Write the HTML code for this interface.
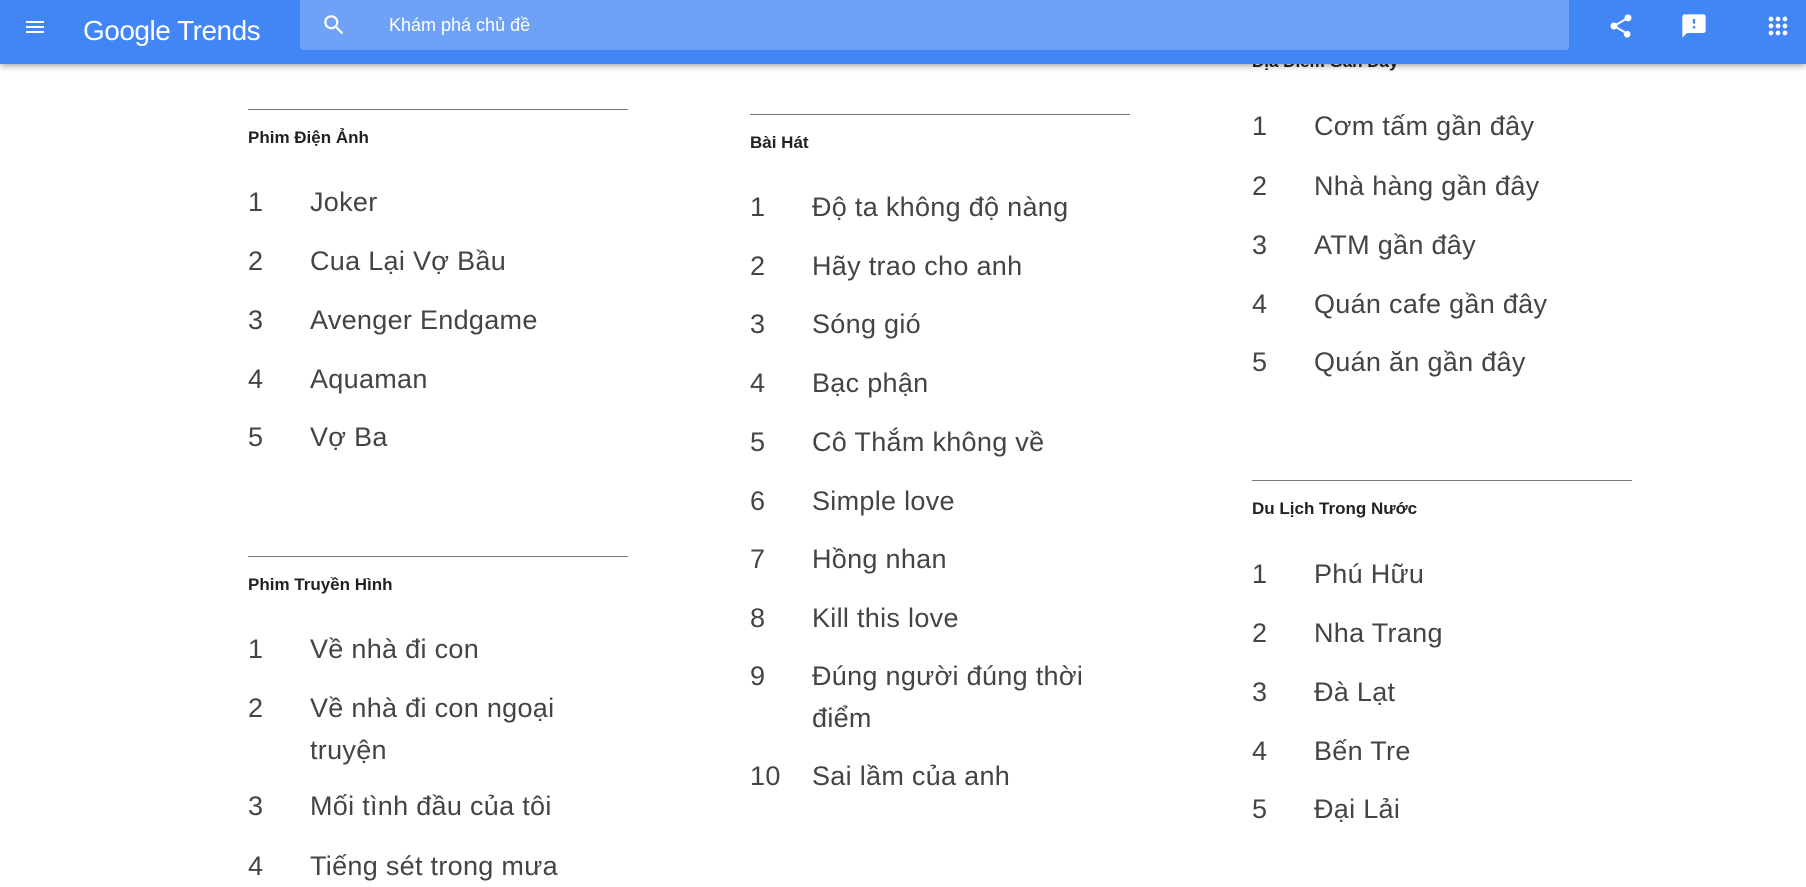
<!DOCTYPE html>
<html><head><meta charset="utf-8"><style>
*{margin:0;padding:0;box-sizing:border-box}
body{width:1806px;height:886px;overflow:hidden;background:#fff;font-family:"Liberation Sans",sans-serif;position:relative;color:#333}
.hdr{position:absolute;left:0;top:0;width:1806px;height:64px;background:#4285f4;box-shadow:0 2px 6px rgba(0,0,0,.35);z-index:5}
.sb{position:absolute;left:300px;top:0;width:1269px;height:50px;background:#6fa1f6;border-radius:0 0 3px 3px}
.a{position:absolute}
.ln{position:absolute;height:1px;background:#777;width:380px}
.tt{position:absolute;font-size:17px;font-weight:bold;color:#222;line-height:20px}
.it{position:absolute;font-size:27px;line-height:42px;white-space:nowrap;color:#444;letter-spacing:0.3px}
.it span{display:inline-block;width:62px}
.it b{font-weight:normal;display:inline-block;vertical-align:top}
</style></head><body>
<div class="hdr">
 <svg class="a" style="left:23px;top:15px" width="24" height="24" viewBox="0 0 24 24"><path d="M3 6h18v2H3zM3 11h18v2H3zM3 16h18v2H3z" fill="#fff"/></svg>
 <div class="a" style="left:83px;top:15px;font-size:28px;color:#fff;letter-spacing:-0.5px">Google Trends</div>
 <div class="sb"></div>
 <svg class="a" style="left:321px;top:12px" width="26" height="26" viewBox="0 0 24 24"><path d="M15.5 14h-.79l-.28-.27A6.47 6.47 0 0 0 16 9.5 6.5 6.5 0 1 0 9.5 16c1.61 0 3.09-.59 4.23-1.57l.27.28v.79l5 4.99L20.49 19l-4.99-5zm-6 0C7.01 14 5 11.99 5 9.5S7.01 5 9.5 5 14 7.01 14 9.5 11.99 14 9.5 14z" fill="#fff"/></svg>
 <div class="a" style="left:389px;top:15px;font-size:18px;color:#fff">Khám phá chủ đề</div>
 <svg class="a" style="left:1607px;top:12px" width="28" height="28" viewBox="0 0 24 24"><path d="M18 16.08c-.76 0-1.440.3-1.96.77L8.91 12.7c.05-.23.09-.46.09-.7s-.04-.47-.09-.7l7.050-4.11c.54.5 1.25.81 2.040.81 1.66 0 3-1.34 3-3s-1.34-3-3-3-3 1.34-3 3c0 .24.04.47.09.7L8.04 9.81C7.5 9.31 6.79 9 6 9c-1.66 0-3 1.34-3 3s1.34 3 3 3c.79 0 1.5-.31 2.04-.81l7.12 4.16c-.5.21-.8.43-.8.65 0 1.61 1.31 2.92 2.92 2.92s2.92-1.31 2.92-2.92-1.31-2.92-2.92-2.920z" fill="#fff"/></svg>
 <svg class="a" style="left:1680px;top:12px" width="28" height="28" viewBox="0 0 24 24"><path d="M20 2H4c-1.1 0-2 .9-2 2v18l4-4h14c1.1 0 2-.9 2-2V4c0-1.1-.9-2-2-2zm-7 12h-2v-2h2v2zm0-4h-2V6h2v4z" fill="#fff"/></svg>
 <svg class="a" style="left:1764px;top:12px" width="28" height="28" viewBox="0 0 24 24"><path d="M6 8c1.1 0 2-.9 2-2s-.9-2-2-2-2 .9-2 2 .9 2 2 2zm6 12c1.1 0 2-.9 2-2s-.9-2-2-2-2 .9-2 2 .9 2 2 2zm-6 0c1.1 0 2-.9 2-2s-.9-2-2-2-2 .9-2 2 .9 2 2 2zm0-6c1.1 0 2-.9 2-2s-.9-2-2-2-2 .9-2 2 .9 2 2 2zm6 0c1.1 0 2-.9 2-2s-.9-2-2-2-2 .9-2 2 .9 2 2 2zm4-8c0 1.1.9 2 2 2s2-.9 2-2-.9-2-2-2-2 .9-2 2zm-4 2c1.1 0 2-.9 2-2s-.9-2-2-2-2 .9-2 2 .9 2 2 2zm6 6c1.1 0 2-.9 2-2s-.9-2-2-2-2 .9-2 2 .9 2 2 2zm0 6c1.1 0 2-.9 2-2s-.9-2-2-2-2 .9-2 2 .9 2 2 2z" fill="#fff"/></svg>
</div>

<div class="tt" style="left:1252px;top:52px">Địa Điểm Gần Đây</div>

<!-- col1 -->
<div class="ln" style="left:248px;top:109px"></div>
<div class="tt" style="left:248px;top:128px">Phim Điện Ảnh</div>
<div class="it" style="left:248px;top:181px"><span>1</span><b>Joker</b></div>
<div class="it" style="left:248px;top:240px"><span>2</span><b>Cua Lại Vợ Bầu</b></div>
<div class="it" style="left:248px;top:299px"><span>3</span><b>Avenger Endgame</b></div>
<div class="it" style="left:248px;top:358px"><span>4</span><b>Aquaman</b></div>
<div class="it" style="left:248px;top:416px"><span>5</span><b>Vợ Ba</b></div>

<div class="ln" style="left:248px;top:556px"></div>
<div class="tt" style="left:248px;top:575px">Phim Truyền Hình</div>
<div class="it" style="left:248px;top:628px"><span>1</span><b>Về nhà đi con</b></div>
<div class="it" style="left:248px;top:687px"><span>2</span><b>Về nhà đi con ngoại<br>truyện</b></div>
<div class="it" style="left:248px;top:785px"><span>3</span><b>Mối tình đầu của tôi</b></div>
<div class="it" style="left:248px;top:845px"><span>4</span><b>Tiếng sét trong mưa</b></div>

<!-- col2 -->
<div class="ln" style="left:750px;top:114px"></div>
<div class="tt" style="left:750px;top:133px">Bài Hát</div>
<div class="it" style="left:750px;top:186px"><span>1</span><b>Độ ta không độ nàng</b></div>
<div class="it" style="left:750px;top:245px"><span>2</span><b>Hãy trao cho anh</b></div>
<div class="it" style="left:750px;top:303px"><span>3</span><b>Sóng gió</b></div>
<div class="it" style="left:750px;top:362px"><span>4</span><b>Bạc phận</b></div>
<div class="it" style="left:750px;top:421px"><span>5</span><b>Cô Thắm không về</b></div>
<div class="it" style="left:750px;top:480px"><span>6</span><b>Simple love</b></div>
<div class="it" style="left:750px;top:538px"><span>7</span><b>Hồng nhan</b></div>
<div class="it" style="left:750px;top:597px"><span>8</span><b>Kill this love</b></div>
<div class="it" style="left:750px;top:655px"><span>9</span><b>Đúng người đúng thời<br>điểm</b></div>
<div class="it" style="left:750px;top:755px"><span>10</span><b>Sai lầm của anh</b></div>

<!-- col3 -->
<div class="it" style="left:1252px;top:105px"><span>1</span><b>Cơm tấm gần đây</b></div>
<div class="it" style="left:1252px;top:165px"><span>2</span><b>Nhà hàng gần đây</b></div>
<div class="it" style="left:1252px;top:224px"><span>3</span><b>ATM gần đây</b></div>
<div class="it" style="left:1252px;top:283px"><span>4</span><b>Quán cafe gần đây</b></div>
<div class="it" style="left:1252px;top:341px"><span>5</span><b>Quán ăn gần đây</b></div>

<div class="ln" style="left:1252px;top:480px"></div>
<div class="tt" style="left:1252px;top:499px">Du Lịch Trong Nước</div>
<div class="it" style="left:1252px;top:553px"><span>1</span><b>Phú Hữu</b></div>
<div class="it" style="left:1252px;top:612px"><span>2</span><b>Nha Trang</b></div>
<div class="it" style="left:1252px;top:671px"><span>3</span><b>Đà Lạt</b></div>
<div class="it" style="left:1252px;top:730px"><span>4</span><b>Bến Tre</b></div>
<div class="it" style="left:1252px;top:788px"><span>5</span><b>Đại Lải</b></div>
</body></html>
